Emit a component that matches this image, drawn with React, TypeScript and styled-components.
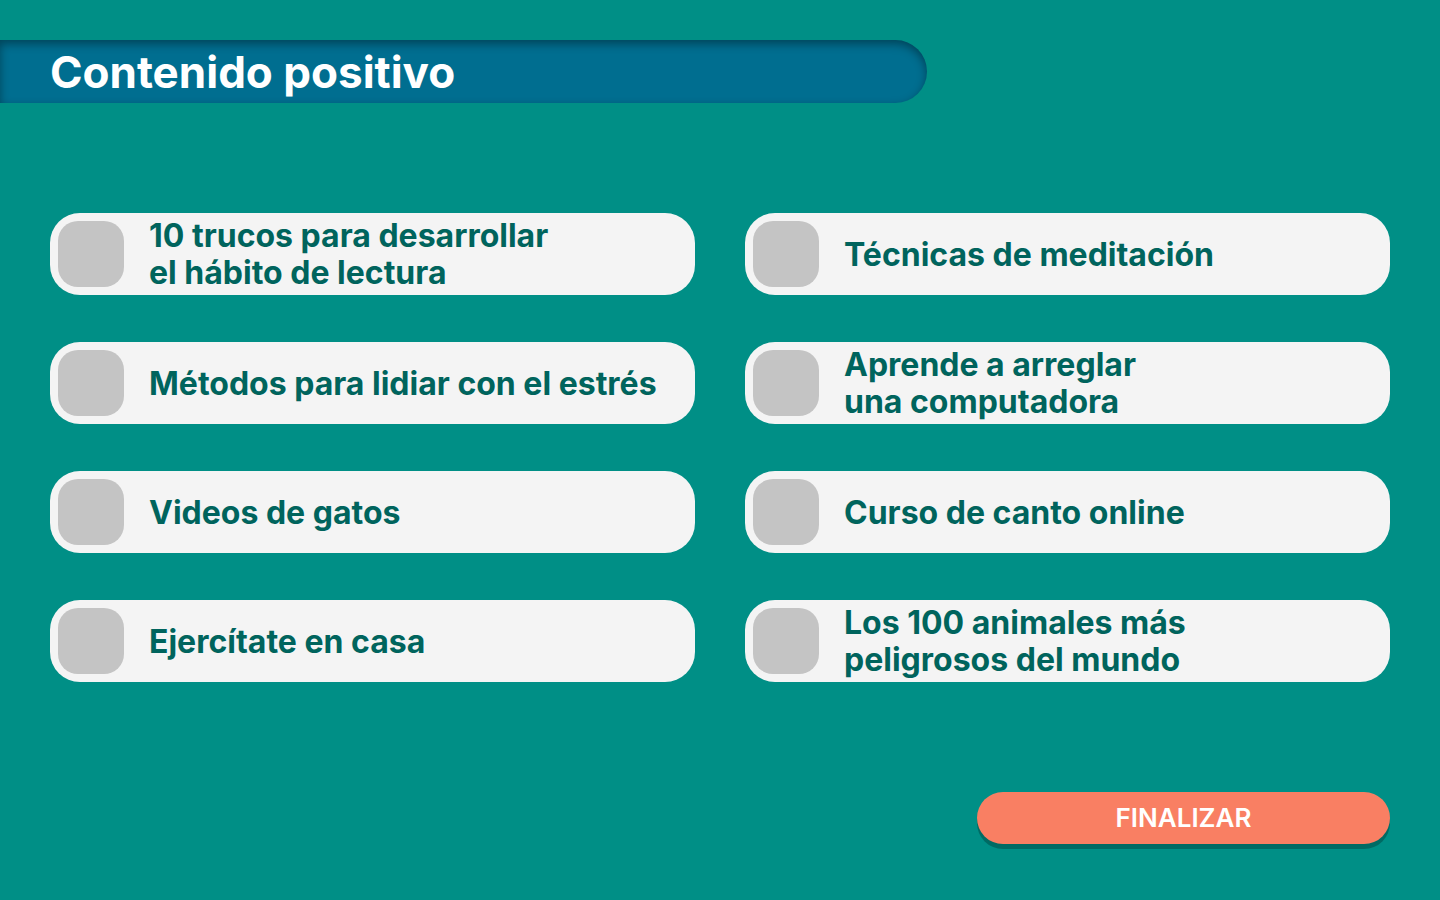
import React from 'react';
import styled, { createGlobalStyle } from 'styled-components';

const GlobalStyle = createGlobalStyle`
  *, *::before, *::after { box-sizing: border-box; }
  body {
    margin: 0;
    background: #008f86;
    font-family: Inter, "Open Sans", sans-serif;
  }
`;

const Page = styled.div`
  display: flex;
  flex-direction: column;
  min-height: 100vh;
  padding: 40px 0 56px;
`;

const Banner = styled.header`
  width: 64.4%;
  padding: 7px 50px 6px;
  border-radius: 0 32px 32px 0;
  background: #006e90;
  box-shadow: inset 0 4px 10px rgba(0, 0, 0, 0.38);
`;

const Title = styled.h1`
  margin: 0;
  color: #ffffff;
  font-size: 44px;
  font-weight: 700;
  line-height: 50px;
`;

const Form = styled.form`
  display: flex;
  flex-direction: column;
  gap: 110px;
  padding: 110px 50px 0;
`;

const Options = styled.div`
  display: grid;
  grid-template-columns: repeat(2, minmax(0, 1fr));
  gap: 47px 50px;
`;

const Option = styled.label`
  display: flex;
  align-items: center;
  gap: 25px;
  min-height: 82px;
  padding: 0 8px;
  border-radius: 30px;
  background: #f4f4f4;
  cursor: pointer;
`;

const Checkbox = styled.input`
  appearance: none;
  flex: none;
  width: 66px;
  height: 66px;
  margin: 0;
  border-radius: 20px;
  background: #c4c4c4;
  cursor: pointer;

  &:checked {
    background: #f97f63;
  }
`;

const OptionText = styled.span`
  color: #00645d;
  font-size: 32px;
  font-weight: 700;
  line-height: 37px;
  white-space: pre-line;
`;

const SubmitButton = styled.button`
  align-self: flex-end;
  width: 413px;
  max-width: 100%;
  height: 52px;
  padding: 0;
  border: 0;
  border-radius: 26px;
  background: #f97f63;
  box-shadow: 0 5px 0 rgba(0, 0, 0, 0.25);
  color: #ffffff;
  font-family: inherit;
  font-size: 26px;
  font-weight: 600;
  line-height: 52px;
  cursor: pointer;
`;

const options = [
  { id: 'lectura', label: '10 trucos para desarrollar\nel hábito de lectura' },
  { id: 'meditacion', label: 'Técnicas de meditación' },
  { id: 'estres', label: 'Métodos para lidiar con el estrés' },
  { id: 'computadora', label: 'Aprende a arreglar\nuna computadora' },
  { id: 'gatos', label: 'Videos de gatos' },
  { id: 'canto', label: 'Curso de canto online' },
  { id: 'ejercicio', label: 'Ejercítate en casa' },
  { id: 'animales', label: 'Los 100 animales más\npeligrosos del mundo' },
];

export default function App() {
  return (
    <>
      <GlobalStyle />
      <Page>
        <Banner>
          <Title>Contenido positivo</Title>
        </Banner>
        <Form onSubmit={(event: React.FormEvent) => event.preventDefault()}>
          <Options>
            {options.map(({ id, label }) => (
              <Option key={id} htmlFor={id}>
                <Checkbox type="checkbox" id={id} name="contenido" value={id} />
                <OptionText>{label}</OptionText>
              </Option>
            ))}
          </Options>
          <SubmitButton type="submit">FINALIZAR</SubmitButton>
        </Form>
      </Page>
    </>
  );
}
